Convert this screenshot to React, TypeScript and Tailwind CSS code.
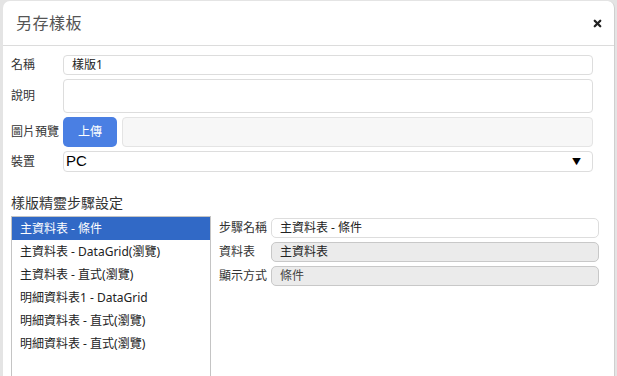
import { X } from "lucide-react"

const steps = [
    "主資料表 - 條件",
    "主資料表 - DataGrid(瀏覽)",
    "主資料表 - 直式(瀏覽)",
    "明細資料表1 - DataGrid",
    "明細資料表 - 直式(瀏覽)",
    "明細資料表 - 直式(瀏覽)",
]

export default function App() {
    const font = { fontFamily: '"Noto Sans", "Noto Sans CJK TC", sans-serif' }

    return (
        <div className="h-[376px] w-[617px] overflow-hidden bg-[#e4e4e4] pl-[3px] pr-[2px] pt-[1px]" style={font}>
            <div className="h-[400px] bg-white rounded-t-[7px] border-r border-[#cfcfcf] text-[#333]">
                {/* Header */}
                <div className="h-[45px] flex items-center justify-between border-b border-[#dcdcdc] pl-[13px] pr-[11px]">
                    <h1 className="text-[16px] text-[#555] tracking-[0.5px]">另存樣板</h1>
                    <X className="w-[11px] h-[11px] text-[#222]" strokeWidth={5} />
                </div>

                {/* Form */}
                <div className="pl-[8px] pr-[21px] pt-[9px] flex flex-col gap-[4px] text-[12px]">
                    <div className="flex items-center">
                        <span className="w-[52px]">名稱</span>
                        <div className="flex-1 h-[20px] border border-[#ddd] rounded-[4px] px-[8px] flex items-center text-[#222]">樣版1</div>
                    </div>
                    <div className="flex items-center">
                        <span className="w-[52px]">說明</span>
                        <div className="flex-1 h-[34px] border border-[#ddd] rounded-[4px]" />
                    </div>
                    <div className="flex items-center">
                        <span className="w-[52px] whitespace-nowrap">圖片預覽</span>
                        <button className="w-[54px] h-[30px] bg-[#4a7fe3] rounded-[5px] text-white text-[12px]">上傳</button>
                        <div className="flex-1 h-[30px] ml-[5px] bg-[#f7f7f7] border border-[#e4e4e4] rounded-[4px]" />
                    </div>
                    <div className="flex items-center">
                        <span className="w-[52px]">裝置</span>
                        <div className="flex-1 h-[21px] border border-[#ddd] rounded-[4px] pl-[2px] pr-[11px] flex items-center justify-between">
                            <span className="text-[15px] text-black" style={{ fontFamily: '"Liberation Sans", Arial, sans-serif' }}>PC</span>
                            <span className="text-[9px] text-black">▼</span>
                        </div>
                    </div>
                </div>

                {/* Steps */}
                <div className="pl-[8px] pr-[15px] mt-[22px]">
                    <h2 className="text-[14px] text-[#333] leading-[18px]">樣版精靈步驟設定</h2>
                    <div className="flex mt-[4px] gap-[8px]">
                        <ul className="w-[200px] h-[200px] border border-[#c4c4c4] text-[12px]">
                            {steps.map((s, i) => (
                                <li
                                    key={i}
                                    className={`h-[23px] flex items-center pl-[8px] ${i === 0 ? "bg-[#3169c6] text-white" : "text-[#222]"}`}
                                >
                                    {s}
                                </li>
                            ))}
                        </ul>
                        <div className="flex-1 flex flex-col gap-[4px] pt-[2px] text-[12px]">
                            <div className="flex items-center">
                                <span className="w-[52px] whitespace-nowrap">步驟名稱</span>
                                <div className="flex-1 h-[20px] border border-[#ddd] rounded-[5px] px-[8px] flex items-center text-[#222]">主資料表 - 條件</div>
                            </div>
                            <div className="flex items-center">
                                <span className="w-[52px]">資料表</span>
                                <div className="flex-1 h-[20px] border border-[#c8c8c8] bg-[#ebebeb] rounded-[5px] px-[8px] flex items-center text-[#222]">主資料表</div>
                            </div>
                            <div className="flex items-center">
                                <span className="w-[52px] whitespace-nowrap">顯示方式</span>
                                <div className="flex-1 h-[20px] border border-[#c8c8c8] bg-[#ebebeb] rounded-[5px] px-[8px] flex items-center text-[#444]">條件</div>
                            </div>
                        </div>
                    </div>
                </div>
            </div>
        </div>
    )
}
